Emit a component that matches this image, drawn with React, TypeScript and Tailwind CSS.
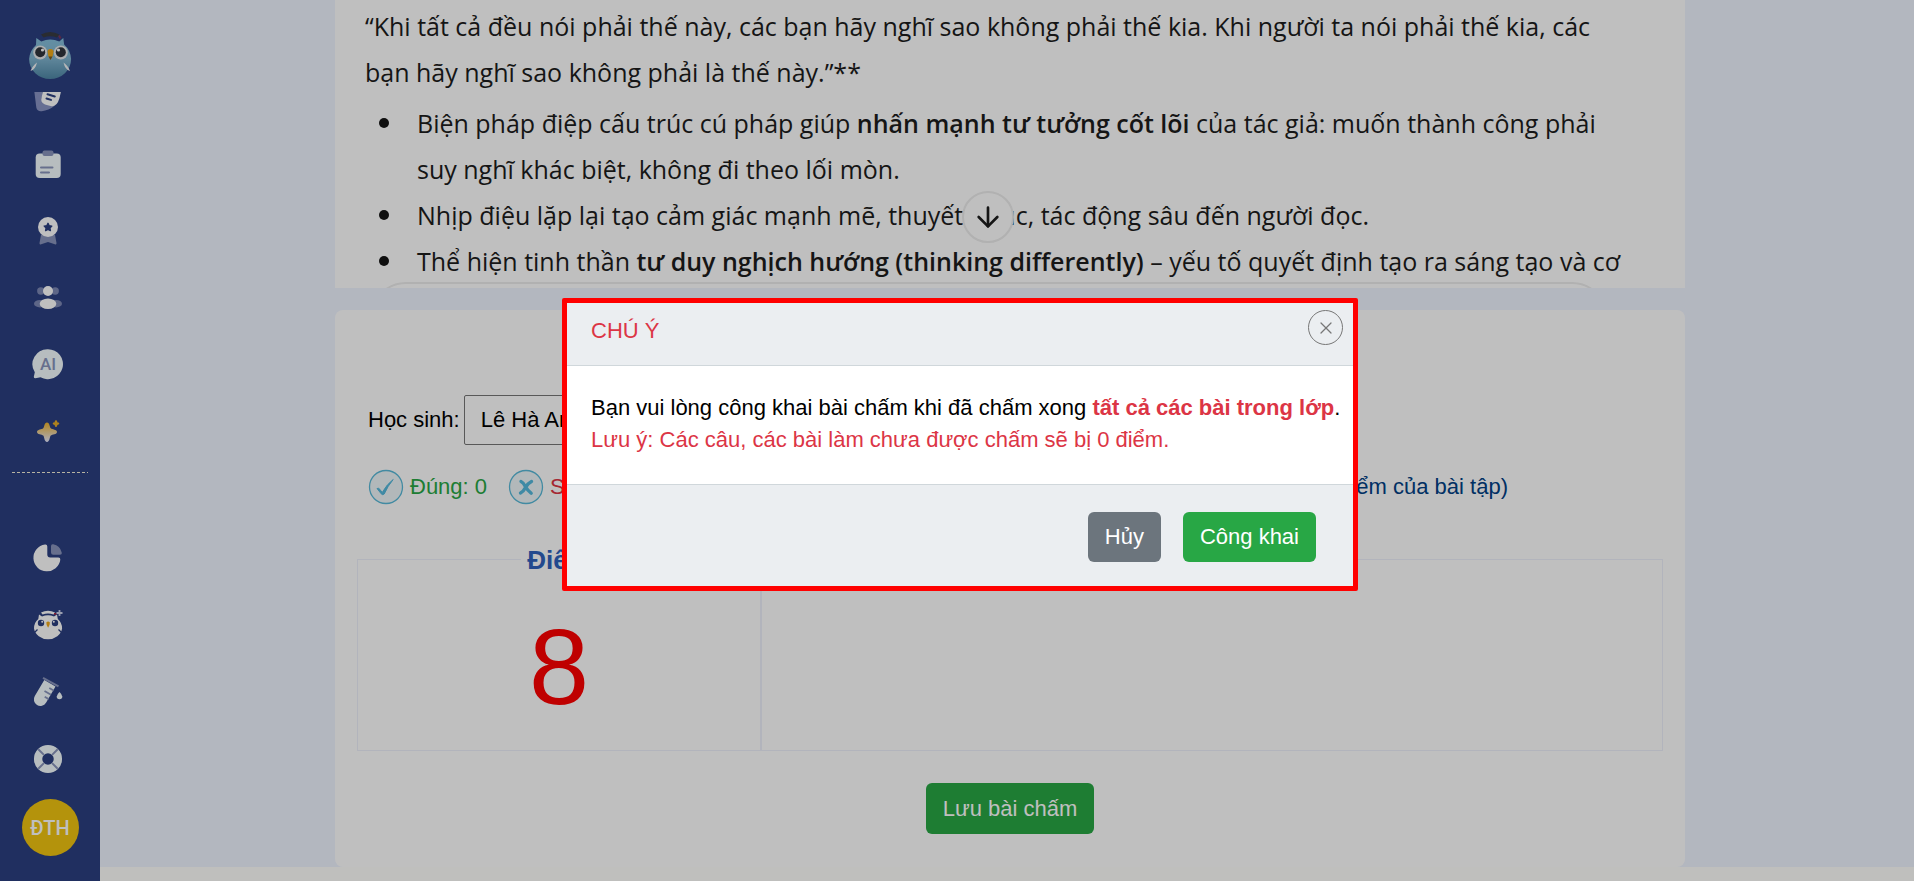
import type { ReactNode } from 'react'
import { ArrowDown, X } from 'lucide-react'

interface IconProps {
  children: ReactNode
}

interface NavItem {
  label: string
  icon: ReactNode
}

function Icon({ children }: IconProps): React.ReactElement {
  return (
    <svg viewBox="0 0 36 36" className="h-9 w-9" fill="none" aria-hidden="true">
      {children}
    </svg>
  )
}

const mainItems: NavItem[] = [
  {
    label: 'Khóa học',
    icon: (
      <Icon>
        <path d="M4 9l2.300 18.500q1 4.300 5.500 3.700q7-1 12.500-5.200l-10-2.500q-3.500-2-2.500-6l1-8.500z" fill="#8a95c4" />
        <path d="M14 5l17.800 3-2.300 10q-2.500 8.800-8 8.300l-6.500-1.800q-4.500-1.800-3.600-6z" fill="#fff" />
        <path d="M17.500 14.300l7.300 2.200M16.500 18.500l4.500 1.400" stroke="#2b3f80" strokeWidth="2" strokeLinecap="round" />
      </Icon>
    ),
  },
  {
    label: 'Bài tập',
    icon: (
      <Icon>
        <rect x="5.700" y="6.500" width="25" height="24.500" rx="4" fill="#f4fdff" />
        <rect x="12.500" y="3.500" width="11" height="5.500" rx="2" fill="#8a95bc" />
        <path d="M11 20.500h11.500M11 25.500h8" stroke="#8a95bc" strokeWidth="2" strokeLinecap="round" />
      </Icon>
    ),
  },
  {
    label: 'Thành tích',
    icon: (
      <Icon>
        <path d="M11 21l-1.500 8q-.2 2 1.700 1.200l6.800-2.200 6.800 2.200q1.900.8 1.700-1.200l-1.500-8z" fill="#8a95bc" />
        <circle cx="18" cy="13" r="10" fill="#fff" />
        <path d="M18 9.300l1.200 2.400 2.600.4-1.900 1.900.5 2.600-2.400-1.200-2.400 1.200.5-2.600-1.900-1.900 2.600-.4z" fill="#2b3f80" stroke="#2b3f80" strokeWidth="1.400" strokeLinejoin="round" />
      </Icon>
    ),
  },
  {
    label: 'Lớp học',
    icon: (
      <Icon>
        <g fill="#7d88b5">
          <circle cx="10.800" cy="10" r="3.700" />
          <circle cx="25.200" cy="10" r="3.700" />
          <ellipse cx="10" cy="22.700" rx="6" ry="3.700" />
          <ellipse cx="26" cy="22.700" rx="6" ry="3.700" />
        </g>
        <g fill="#fff">
          <circle cx="18" cy="10" r="5" />
          <ellipse cx="18" cy="22.700" rx="8.300" ry="5.200" />
        </g>
      </Icon>
    ),
  },
  {
    label: 'Trợ lý AI',
    icon: (
      <Icon>
        <path d="M18 1.200a15 15 0 1 1-7.500 28l-5 1q-2.200 0-1.500-2.200l.8-3.800A15 15 0 0 1 18 1.200z" fill="#f4fdff" />
        <text x="18" y="22" textAnchor="middle" fontFamily="Roboto, sans-serif" fontSize="17" fontWeight="500" fill="#8a95bc">
          AI
        </text>
      </Icon>
    ),
  },
  {
    label: 'Công cụ',
    icon: (
      <Icon>
        <defs>
          <linearGradient id="spark" x1="0" y1="0" x2="0" y2="1">
            <stop offset="0" stopColor="#f0b32a" />
            <stop offset="1" stopColor="#e4e8ff" />
          </linearGradient>
        </defs>
        <path d="M17 7.500c2.800 0 2.500 4.500 3.800 5.800s6.200 1.200 6.200 3.600-5 2.400-6.200 3.600-1 6.400-3.800 6.400-2.600-5.200-3.800-6.400S7 19.300 7 16.900s5-2.400 6.200-3.600S14.200 7.500 17 7.500z" fill="url(#spark)" />
        <path d="M26 5.300c1.500 0 1 1.500 1.400 1.900s1.900 0 1.900 1.400-1.500 1-1.900 1.400 0 1.900-1.400 1.900-1-1.500-1.400-1.900-1.900 0-1.900-1.400 1.500-1 1.900-1.400-.1-1.900 1.400-1.900z" fill="#e9ae28" />
      </Icon>
    ),
  },
]

const extraItems: NavItem[] = [
  {
    label: 'Thống kê',
    icon: (
      <Icon>
        <path d="M15 4.500q2.300-.3 2.300 2v8q0 3 3 3h8q2.300 0 2 2.200A13.500 13.500 0 1 1 15 4.500z" fill="#fff" />
        <path d="M21 6.200q0-2.300 2.200-1.900a11 11 0 0 1 8.500 8.200q.4 2.200-1.900 2.200h-6.500q-2.300 0-2.300-2.300z" fill="#8a95bc" />
      </Icon>
    ),
  },
  {
    label: 'Cú học tập',
    icon: (
      <Icon>
        <path d="M9 7.500l3 2q6-2.500 12 0l3-2 .8 4.500a14 13 0 0 1 4.300 9.500A14.200 12.500 0 0 1 4 21.500q0-6 4.300-9.500z" fill="#fff" />
        <path d="M11 5.500q7-3.500 14 0l-1.500 2q-5.500-1.800-11 0z" fill="#fff" />
        <circle cx="11" cy="16" r="3.200" fill="#2b3f80" />
        <circle cx="25" cy="16" r="3.200" fill="#2b3f80" />
        <circle cx="12.200" cy="14.800" r="1" fill="#fff" />
        <circle cx="23.800" cy="14.800" r="1" fill="#fff" />
        <path d="M16.300 15.500q1.800-1.800 3.600 0 0 3-1.800 5.300-1.800-2.300-1.800-5.300z" fill="#f0a91c" />
        <path d="M4.500 25.500l3-3M31.500 25.500l-3-3" stroke="#2b3f80" strokeWidth="1.300" />
        <path d="M24 6.800h2.500" stroke="#b5223c" strokeWidth="1.500" />
        <path d="M29.500 3v6M26.500 6h6" stroke="#cdd3ea" strokeWidth="1.800" />
      </Icon>
    ),
  },
  {
    label: 'Thí nghiệm',
    icon: (
      <Icon>
        <path d="M14.300 6L25.500 12.500 16 28.800A6.500 6.500 0 0 1 4.800 22z" fill="#f4fdff" />
        <path d="M13 3.800L28.500 12.300" stroke="#8a95bc" strokeWidth="2" />
        <path d="M19.300 14l4.300 2.500M14.500 17l6.500 3.800M14.700 22.800l4 2.300" stroke="#8a95bc" strokeWidth="1.800" />
        <path d="M29.500 18q2.800 2.700 2.800 4.500a2.800 2.800 0 0 1-5.600 0q0-1.800 2.800-4.500z" fill="#f4fdff" />
      </Icon>
    ),
  },
  {
    label: 'Hỗ trợ',
    icon: (
      <Icon>
        <circle cx="18" cy="18" r="9.900" stroke="#f4fdff" strokeWidth="8.300" />
        <path d="M8.300 8.300l5.600 5.600M27.700 8.300l-5.600 5.600M8.300 27.700l5.600-5.600M27.700 27.700l-5.600-5.600" stroke="#8a95bc" strokeWidth="2" />
      </Icon>
    ),
  },
]

function OwlLogo(): React.ReactElement {
  return (
    <svg viewBox="0 0 44 49" className="h-[49px] w-11" aria-hidden="true">
      <defs>
        <linearGradient id="owl" x1="0" y1="0" x2="0" y2="1">
          <stop offset="0" stopColor="#86c0dc" />
          <stop offset="0.500" stopColor="#80b4cf" />
          <stop offset="1" stopColor="#4f87a6" />
        </linearGradient>
      </defs>
      <path d="M8.300 7l5 3.500q9-4 18 0l4-3.500.8 6.500a21 21 0 0 1 7 14.500 21 20 0 0 1-42 0A21 21 0 0 1 8 14z" fill="url(#owl)" />
      <path d="M13 3.500q9-5 18.500 0L29 6.500q-7-2.500-13.500 0z" fill="#383b42" />
      <path d="M31 4.500l1.500 3" stroke="#7d3558" strokeWidth="2" />
      <circle cx="12.200" cy="21.500" r="7" fill="#e6e8ea" />
      <circle cx="32.800" cy="21.500" r="7" fill="#e6e8ea" />
      <circle cx="12.200" cy="21.200" r="5" fill="#30353b" />
      <circle cx="32.800" cy="21.200" r="5" fill="#30353b" />
      <circle cx="14.500" cy="19" r="1.600" fill="#fff" />
      <circle cx="30.500" cy="19" r="1.600" fill="#fff" />
      <path d="M19.500 20.500q0-2.500 3-2.500t3 2.500q0 4-3 8.300-3-4.300-3-8.300z" fill="#f0a918" />
      <path d="M20.500 25.500h4l-2 3.500z" fill="#7a5c25" />
      <path d="M9 31.500q-4.500 3-6.500 8.500 5-1.500 6.500-8.500zM35.500 31.500q4.500 3 6.500 8.500-5-1.500-6.500-8.500z" fill="#f1f3f5" />
    </svg>
  )
}

function NavList({ items }: { items: NavItem[] }): React.ReactElement {
  return (
    <ul>
      {items.map((item) => (
        <li key={item.label}>
          <a href="#" aria-label={item.label} className="flex h-[67px] items-center justify-center pr-1">
            {item.icon}
          </a>
        </li>
      ))}
    </ul>
  )
}

function Sidebar(): React.ReactElement {
  return (
    <aside className="flex w-[100px] shrink-0 flex-col items-center bg-[#2b3f80]">
      <a href="#" aria-label="Trang chủ" className="mt-[31px] mb-3">
        <OwlLogo />
      </a>
      <nav className="w-full overflow-hidden">
        <div className="-mt-7">
          <NavList items={mainItems} />
        </div>
      </nav>
      <svg className="mt-1.5 h-px w-[76px]" aria-hidden="true">
        <line x1="0" y1="0.500" x2="76" y2="0.500" stroke="#f5efd8" strokeDasharray="3 2" />
      </svg>
      <nav className="mt-[51px] w-full">
        <NavList items={extraItems} />
      </nav>
      <button className="mt-[7px] h-[57px] w-[57px] rounded-full bg-[#f0c410] font-['Roboto',sans-serif] text-[20px] font-medium text-white">
        ĐTH
      </button>
    </aside>
  )
}

function Bullet({ children }: { children: ReactNode }): React.ReactElement {
  return (
    <li className="flex gap-7 pl-3.5 before:mt-[18px] before:h-2.5 before:w-2.5 before:shrink-0 before:rounded-full before:bg-[#141414]">
      <span>{children}</span>
    </li>
  )
}

function EssayCard(): React.ReactElement {
  return (
    <section className="relative overflow-hidden bg-white text-[#1c1c1c]">
      <div className="pl-[30px] font-['Open_Sans',sans-serif] text-[25px] leading-[46px] whitespace-nowrap">
        <p className="pt-[3px]">
          “Khi tất cả đều nói phải thế này, các bạn hãy nghĩ sao không phải thế kia. Khi người ta nói phải thế kia, các
          <br />
          bạn hãy nghĩ sao không phải là thế này.”**
        </p>
        <ul className="mt-[5px] -mb-0.5">
          <Bullet>
            Biện pháp điệp cấu trúc cú pháp giúp <strong className="font-semibold">nhấn mạnh tư tưởng cốt lõi</strong> của tác giả: muốn thành công phải
            <br />
            suy nghĩ khác biệt, không đi theo lối mòn.
          </Bullet>
          <Bullet>Nhịp điệu lặp lại tạo cảm giác mạnh mẽ, thuyết phục, tác động sâu đến người đọc.</Bullet>
          <Bullet>
            Thể hiện tinh thần <strong className="font-semibold">tư duy nghịch hướng (thinking differently)</strong> – yếu tố quyết định tạo ra sáng tạo và cơ
          </Bullet>
        </ul>
      </div>
      <div className="mr-[77px] ml-[35px] h-[6px] overflow-hidden">
        <div className="h-20 rounded-[36px] border-2 border-[#ececec]" />
      </div>
      <button
        aria-label="Cuộn xuống"
        className="absolute bottom-[45px] left-[627px] flex h-[52px] w-[52px] items-center justify-center rounded-full border-2 border-[#ececec] bg-white"
      >
        <ArrowDown className="h-8 w-8" strokeWidth={2} />
      </button>
    </section>
  )
}

function GradeCard(): React.ReactElement {
  return (
    <section className="mt-[22px] flex flex-col rounded-lg bg-white pt-[85px] pb-[33px]">
      <div className="flex items-center gap-1 pl-[33px]">
        <label htmlFor="student">Học sinh:</label>
        <select id="student" className="h-[50px] w-[360px] appearance-none rounded-xs border border-[#767676] px-4 text-black">
          <option>Lê Hà Anh</option>
        </select>
      </div>
      <div className="mt-6 flex h-[35px] items-center pr-[177px] pl-[33px]">
        <svg viewBox="0 0 36 36" className="h-9 w-9" fill="none" aria-hidden="true">
          <circle cx="18" cy="18" r="16.500" fill="#eef6f8" stroke="#58b9d8" strokeWidth="1.300" />
          <path d="M9 19.500q1.800-.8 2.800.8l2.400 3.200q4.800-8.500 11-13-5.500 6.500-9 14.500-1.500 1.500-3-.2z" fill="#55b9dc" stroke="#55b9dc" strokeLinejoin="round" />
        </svg>
        <span className="ml-[6px] text-[#28a745]">Đúng: 0</span>
        <svg viewBox="0 0 36 36" className="ml-[21px] h-9 w-9" fill="none" aria-hidden="true">
          <circle cx="18" cy="18" r="16.500" fill="#eef6f8" stroke="#58b9d8" strokeWidth="1.300" />
          <path d="M13 12.500q2.200 1 4.200 4.700t6 7M23.500 12.500q-4 2-6 6t-5 5.500" stroke="#55b9dc" strokeWidth="3.400" strokeLinecap="round" />
        </svg>
        <span className="ml-[6px] text-[#dc3545]">Sai: 0</span>
        <span className="ml-auto text-[#004085]">(Thang điểm của bài tập)</span>
      </div>
      <div className="mx-[22px] mt-[55px] flex h-[192px] border border-[#eef1fb]">
        <div className="relative flex w-[31%] items-center justify-center border-r-2 border-[#eef1fb]">
          <h2 className="absolute -top-5 bg-white px-1.5 text-[26px] leading-10 font-bold text-[#2f62bd]">Điểm</h2>
          <span className="pt-6 text-[108px] leading-none text-[#ff0000]">8</span>
        </div>
        <div className="flex-1" />
      </div>
      <button className="mt-8 self-center rounded-md bg-[#28a745] px-[17px] pt-2.5 pb-[9px] text-white">Lưu bài chấm</button>
    </section>
  )
}

function PublishDialog(): React.ReactElement {
  return (
    <div className="fixed inset-0 flex items-center justify-center bg-black/25 pt-2 pl-1.5">
      <div
        role="dialog"
        aria-modal="true"
        aria-labelledby="dialog-title"
        className="w-[796px] rounded-xs border-[5px] border-[#ff0000] bg-[#ebeef1]"
      >
        <header className="flex items-start justify-between border-b border-[#d0d7db] pt-[7px] pr-2.5 pb-[18px] pl-5">
          <h1 id="dialog-title" className="pt-[5px] pl-1 text-[#dc3545]">
            CHÚ Ý
          </h1>
          <button
            aria-label="Đóng"
            className="flex h-[35px] w-[35px] items-center justify-center rounded-full border border-[#777] text-[#777]"
          >
            <X className="h-5 w-5" strokeWidth={1.5} />
          </button>
        </header>
        <div className="bg-white pt-[26px] pb-7 pl-6">
          <p>
            Bạn vui lòng công khai bài chấm khi đã chấm xong <strong className="text-[#dc3545]">tất cả các bài trong lớp</strong>.
          </p>
          <p className="text-[#dc3545]">Lưu ý: Các câu, các bài làm chưa được chấm sẽ bị 0 điểm.</p>
        </div>
        <footer className="flex justify-end gap-[22px] border-t border-[#d0d7db] pt-[27px] pr-[37px] pb-6">
          <button className="rounded-md bg-[#6c757d] px-[17px] py-[9px] text-white">Hủy</button>
          <button className="rounded-md bg-[#28a745] px-[17px] py-[9px] text-white">Công khai</button>
        </footer>
      </div>
    </div>
  )
}

export default function App(): React.ReactElement {
  return (
    <div className="flex min-h-screen bg-[#fffffc] font-['Liberation_Sans',Arial,sans-serif] text-[22px] leading-8 text-black">
      <Sidebar />
      <div className="min-w-0 flex-1">
        <main className="bg-[#eff4ff] pl-1.5">
          <div className="mx-auto max-w-[1350px]">
            <EssayCard />
            <GradeCard />
          </div>
        </main>
      </div>
      <PublishDialog />
    </div>
  )
}
